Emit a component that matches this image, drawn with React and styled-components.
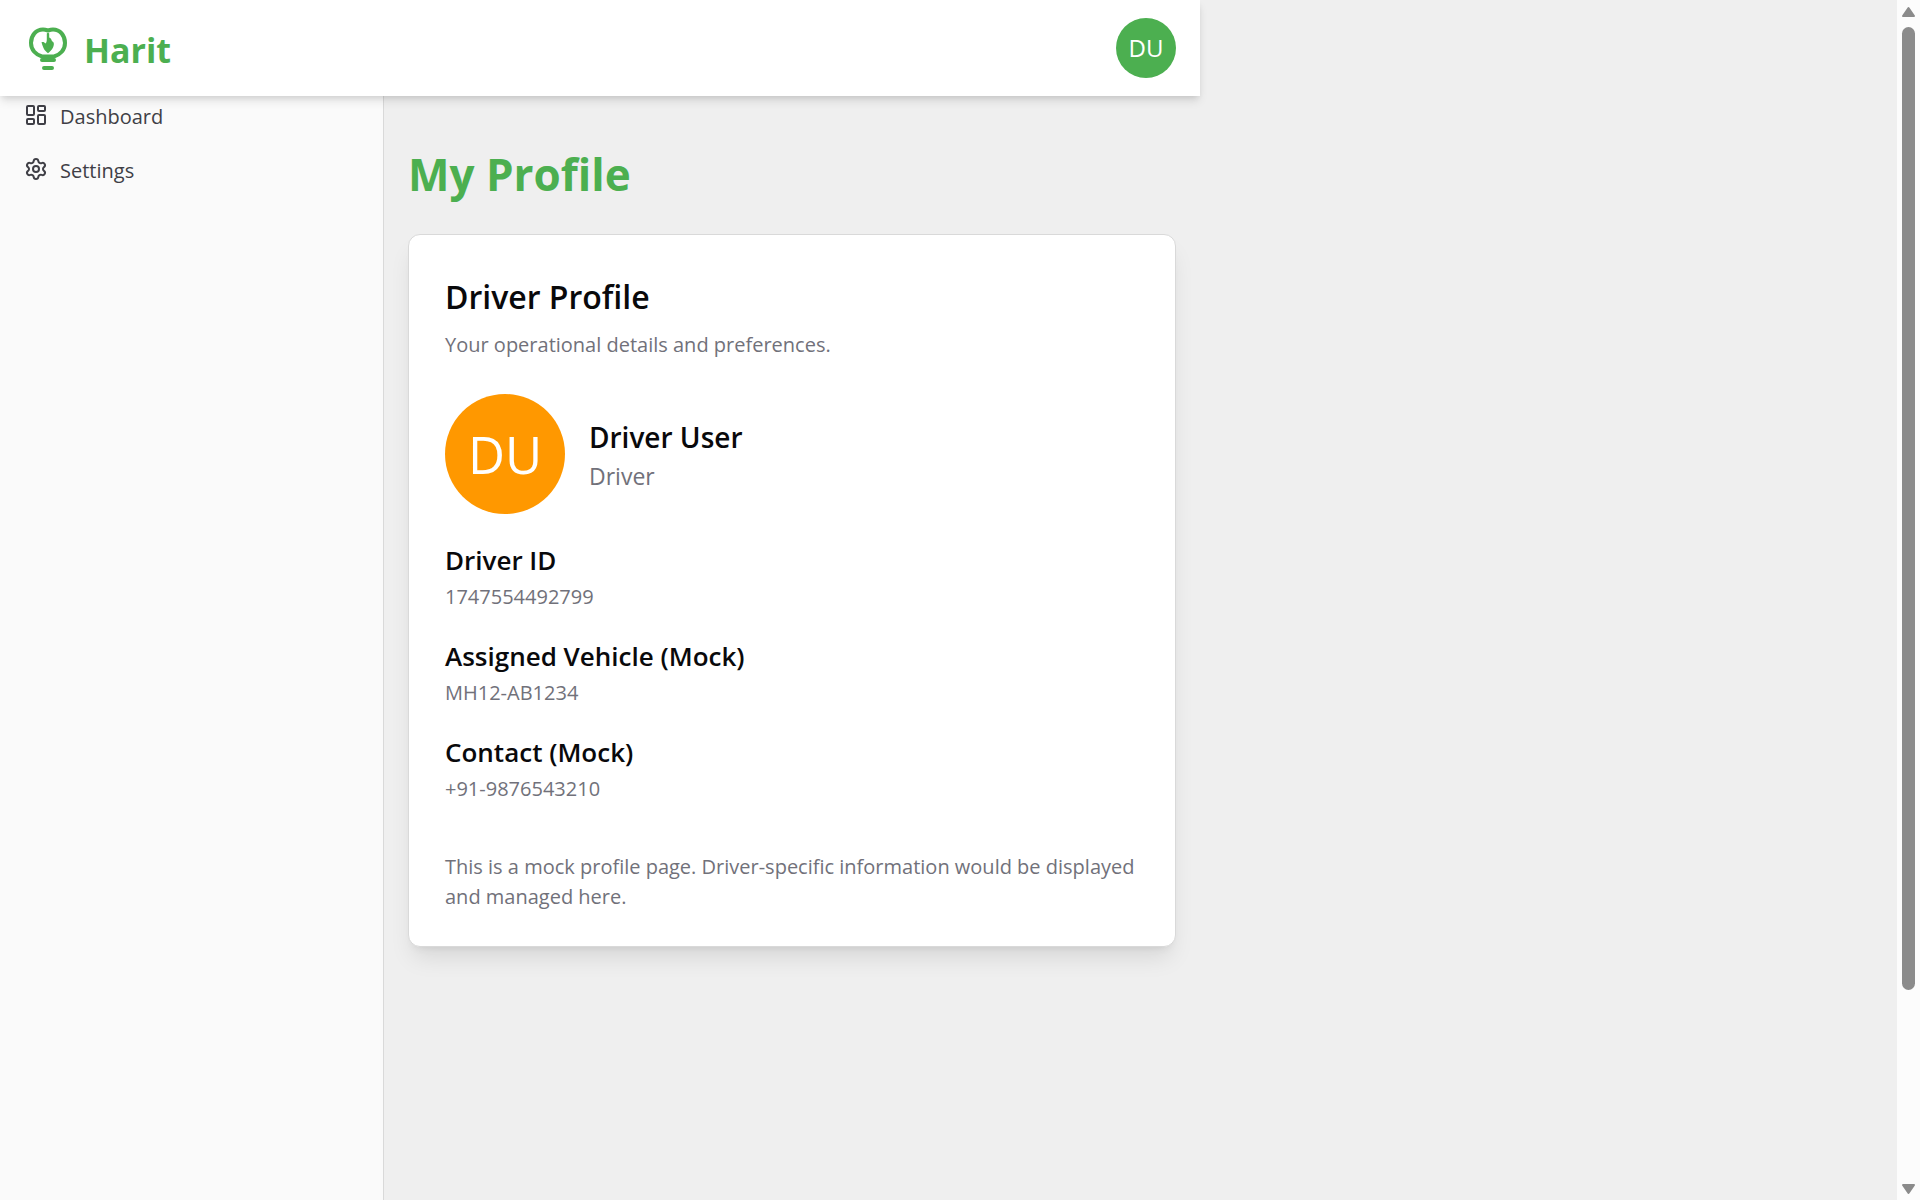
import React from "react";
import styled, { createGlobalStyle } from "styled-components";
import { LayoutDashboard, Settings } from "lucide-react";

const GlobalStyle = createGlobalStyle`
  *, *::before, *::after { box-sizing: border-box; }
  body {
    margin: 0;
    background: #efefef;
    color: #09090b;
    font-family: "Segoe UI", "Open Sans", "Noto Sans", sans-serif;
    font-size: 20px;
    line-height: 30px;
  }
  h1, h2, h3, p, ul, dl, dd { margin: 0; padding: 0; }
`;

const Window = styled.div`
  display: flex;
  height: 100vh;
  overflow: hidden;
`;

const Viewport = styled.div`
  flex: 1;
  min-width: 0;
`;

const Shell = styled.div`
  display: flex;
  flex-direction: column;
  max-width: 1200px;
  height: 100%;
`;

const Header = styled.header`
  position: relative;
  z-index: 1;
  display: flex;
  align-items: center;
  justify-content: space-between;
  flex: none;
  height: 96px;
  padding: 0 24px;
  background: #ffffff;
  box-shadow: 0 6px 9px -1px rgba(0, 0, 0, 0.1), 0 3px 6px -2px rgba(0, 0, 0, 0.1);
`;

const Brand = styled.a`
  display: flex;
  align-items: center;
  gap: 12px;
  color: #4caf50;
  font-size: 34px;
  font-weight: 700;
  line-height: 52px;
  text-decoration: none;
`;

const Label = styled.span`
  padding-top: 4px;
`;

const Avatar = styled.span`
  display: flex;
  align-items: center;
  justify-content: center;
  flex: none;
  width: ${(p) => p.$size}px;
  height: ${(p) => p.$size}px;
  border-radius: 50%;
  background: ${(p) => p.$color};
  color: #ffffff;
  font-size: ${(p) => p.$text}px;
  line-height: 1;
`;

const AvatarButton = styled.button`
  padding: 0;
  border: 0;
  border-radius: 50%;
  background: none;
  font-family: inherit;
  cursor: pointer;
`;

const Body = styled.div`
  display: flex;
  flex: 1;
  min-height: 0;
`;

const Sidebar = styled.nav`
  flex: none;
  width: 384px;
  border-right: 1px solid #d9d9d9;
  background: #fafafa;
`;

const NavList = styled.ul`
  display: flex;
  flex-direction: column;
  gap: 16px;
  list-style: none;
`;

const NavLink = styled.a`
  display: flex;
  align-items: center;
  gap: 12px;
  height: 38px;
  padding: 0 24px;
  color: #3f3f46;
  text-decoration: none;
`;

const Main = styled.main`
  flex: 1;
  min-width: 0;
  padding: 48px 24px;
`;

const PageTitle = styled.h1`
  margin-bottom: 30px;
  color: #4caf50;
  font-size: 44px;
  font-weight: 700;
  line-height: 60px;
`;

const Card = styled.section`
  padding: 36px 36px 34px;
  border: 1px solid #d9d9d9;
  border-radius: 12px;
  background: #ffffff;
  box-shadow: 0 15px 23px -5px rgba(0, 0, 0, 0.1), 0 6px 9px -6px rgba(0, 0, 0, 0.1);
`;

const CardTitle = styled.h2`
  margin-bottom: 7px;
  font-size: 32px;
  font-weight: 600;
  line-height: 52px;
`;

const Muted = styled.p`
  color: #71717a;
  font-size: ${(p) => (p.$large ? 23 : 20)}px;
`;

const Person = styled.div`
  display: flex;
  align-items: center;
  gap: 24px;
  margin: 34px 0 24px;
`;

const PersonText = styled.div`
  padding-top: 2px;
`;

const PersonName = styled.h3`
  margin-bottom: 6px;
  font-size: 28px;
  font-weight: 600;
  line-height: 36px;
`;

const Details = styled.dl`
  display: flex;
  flex-direction: column;
  gap: 22px;
  margin-bottom: 48px;
`;

const Term = styled.dt`
  font-size: 26px;
  font-weight: 600;
  line-height: 44px;
`;

const ScrollTrack = styled.div`
  display: flex;
  flex-direction: column;
  align-items: center;
  justify-content: space-between;
  flex: none;
  width: 23px;
  padding: 6px 0 5px;
  background: #fcfcfc;
`;

const ScrollThumb = styled.div`
  width: 13px;
  height: 81%;
  margin: 9px 0 auto;
  border-radius: 7px;
  background: #8b8b8b;
`;

function Logo() {
  return (
    <svg width="48" height="48" viewBox="0 0 48 48" fill="none" stroke="currentColor" strokeLinecap="round" strokeLinejoin="round" aria-hidden="true">
      <path
        d="M18 32.500C12 31 7 26 7 19C7 11.500 12 5.500 19 5.500C21 5.500 22.500 6 24 6.500C25.500 6 27 5.500 29 5.500C36 5.500 41 11.500 41 19C41 26 36 31 30 32.500Z"
        strokeWidth="4"
      />
      <path d="M18 36H30M20 44H28" strokeWidth="4" />
      <path
        d="M22.800 9.500Q24 8 25.200 9.500V13.500C28 14.500 27 16.500 28.500 17.500C30.500 18.500 30 21.500 29 23.500C28 26 25.500 28 24 29.200C22.500 28 20.500 26.500 19.500 24C18.500 22 18 20 17.500 18.200C19 17.500 20.500 18 21.500 19.500C22.500 18.500 22.800 17 22.800 15Z"
        fill="currentColor"
        stroke="none"
      />
    </svg>
  );
}

function Arrow({ down }) {
  return (
    <svg width="15" height="12" viewBox="0 0 15 12" aria-hidden="true">
      <path d={down ? "M2 2H13L7.5 10Z" : "M2 10H13L7.5 2Z"} fill="#8b8b8b" stroke="#8b8b8b" strokeWidth="2" strokeLinejoin="round" />
    </svg>
  );
}

const links = [
  { label: "Dashboard", Icon: LayoutDashboard },
  { label: "Settings", Icon: Settings },
];

const details = [
  ["Driver ID", "1747554492799"],
  ["Assigned Vehicle (Mock)", "MH12-AB1234"],
  ["Contact (Mock)", "+91-9876543210"],
];

export default function App() {
  return (
    <Window>
      <GlobalStyle />
      <Viewport>
        <Shell>
          <Header>
            <Brand href="#">
              <Logo />
              <Label>Harit</Label>
            </Brand>
            <AvatarButton type="button">
              <Avatar $size={60} $text={24} $color="#4caf50">DU</Avatar>
            </AvatarButton>
          </Header>
          <Body>
            <Sidebar>
              <NavList>
                {links.map(({ label, Icon }) => (
                  <li key={label}>
                    <NavLink href="#">
                      <Icon size={24} />
                      <Label>{label}</Label>
                    </NavLink>
                  </li>
                ))}
              </NavList>
            </Sidebar>
            <Main>
              <PageTitle>My Profile</PageTitle>
              <Card>
                <CardTitle>Driver Profile</CardTitle>
                <Muted>Your operational details and preferences.</Muted>
                <Person>
                  <Avatar $size={120} $text={51} $color="#ff9800">DU</Avatar>
                  <PersonText>
                    <PersonName>Driver User</PersonName>
                    <Muted $large>Driver</Muted>
                  </PersonText>
                </Person>
                <Details>
                  {details.map(([term, value]) => (
                    <div key={term}>
                      <Term>{term}</Term>
                      <Muted as="dd">{value}</Muted>
                    </div>
                  ))}
                </Details>
                <Muted>
                  This is a mock profile page. Driver-specific information would be displayed and managed here.
                </Muted>
              </Card>
            </Main>
          </Body>
        </Shell>
      </Viewport>
      <ScrollTrack>
        <Arrow />
        <ScrollThumb />
        <Arrow down />
      </ScrollTrack>
    </Window>
  );
}
